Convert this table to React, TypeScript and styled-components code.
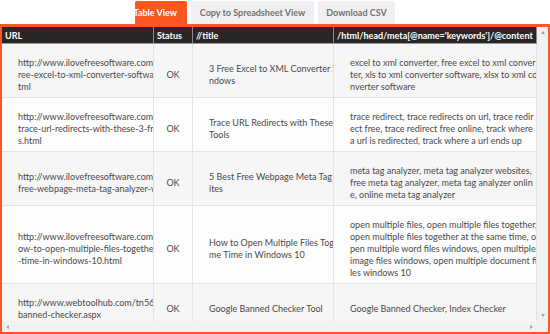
import React from 'react';
import { styled, createGlobalStyle } from 'styled-components';

const GlobalStyles = createGlobalStyle`
html, body {
  margin: 0;
  padding: 0;
  background: #ffffff;
}

body {
  font-family: Lato, 'Open Sans', sans-serif;
  width: 550px;
  height: 334px;
  overflow: hidden;
}
`;

const Page = styled.div`
  display: flex;
  flex-direction: column;
  width: 550px;
  height: 334px;
`;

const TabBar = styled.div`
  display: flex;
  gap: 4px;
  height: 23px;
  margin-top: 1px;
  padding-left: 135px;
`;

const Tab = styled.div<{ $active?: boolean; $width: number }>`
  display: flex;
  align-items: center;
  justify-content: ${(p) => (p.$active ? 'flex-end' : 'center')};
  width: ${(p) => p.$width}px;
  padding-right: ${(p) => (p.$active ? 10 : 0)}px;
  box-sizing: border-box;
  overflow: hidden;
  white-space: nowrap;
  border-radius: 2px 2px 0 0;
  background: ${(p) => (p.$active ? '#fd5621' : '#f0f0f0')};
  color: ${(p) => (p.$active ? '#ffffff' : '#737373')};
  font-size: 9px;
  font-weight: 700;
`;

const Frame = styled.div`
  display: flex;
  flex-direction: column;
  flex: 1;
  border: 2px solid #fd5621;
  border-top-width: 3px;
  min-height: 0;
`;

const Body = styled.div`
  display: flex;
  flex: 1;
  min-height: 0;
`;

const TableClip = styled.div`
  width: 535px;
  overflow: hidden;
`;

const Row = styled.div<{ $shade?: boolean }>`
  display: grid;
  grid-template-columns: 152px 39px 141px 203px;
  background: ${(p) => (p.$shade ? '#f6f6f6' : '#fdfdfd')};
  border-bottom: 1px solid #e3e3e3;
`;

const HeadRow = styled.div`
  display: grid;
  grid-template-columns: 152px 39px 141px 203px;
  height: 16px;
  background: #2a2626;
  border-bottom: 1px solid #9a9a9a;
`;

const HeadCell = styled.div`
  display: flex;
  align-items: center;
  padding-left: 3px;
  border-right: 1px solid #8a8a8a;
  color: #ffffff;
  font-size: 9px;
  font-weight: 700;
  white-space: nowrap;
  overflow: hidden;
`;

const Cell = styled.div<{ $center?: boolean }>`
  display: flex;
  flex-direction: column;
  justify-content: center;
  align-items: ${(p) => (p.$center ? 'center' : 'flex-start')};
  padding: 13px ${(p) => (p.$center ? 0 : 16)}px 4px;
  border-right: 1px solid #e3e3e3;
  overflow: hidden;
  color: #4a4a4a;
  font-size: 9px;
  line-height: 12px;
`;

const Line = styled.span`
  display: block;
  white-space: nowrap;
`;

const VScroll = styled.div`
  display: flex;
  flex-direction: column;
  justify-content: space-between;
  align-items: center;
  width: 11px;
  padding: 4px 0;
  box-sizing: border-box;
  background: #f1f1f1;
`;

const HScroll = styled.div`
  display: flex;
  justify-content: space-between;
  align-items: center;
  height: 11px;
  padding: 0 15px 0 4px;
  background: #f1f1f1;
`;

const Arrow = styled.span<{ $dir: 'up' | 'down' | 'left' | 'right' }>`
  width: 0;
  height: 0;
  border-style: solid;
  border-color: transparent;
  ${(p) =>
    p.$dir === 'up'
      ? 'border-width: 0 2.5px 3px 2.5px; border-bottom-color: #a3a3a3;'
      : p.$dir === 'down'
      ? 'border-width: 3px 2.5px 0 2.5px; border-top-color: #a3a3a3;'
      : p.$dir === 'left'
      ? 'border-width: 2.5px 3px 2.5px 0; border-right-color: #a3a3a3;'
      : 'border-width: 2.5px 0 2.5px 3px; border-left-color: #a3a3a3;'}
`;

type Entry = { url: string[]; status: string; title: string[]; keywords: string[] };

const rows: Entry[] = [
  {
    url: ['http://www.ilovefreesoftware.com/f', 'ree-excel-to-xml-converter-software-windows.h', 'tml'],
    status: 'OK',
    title: ['3 Free Excel to XML Converter Software For Wi', 'ndows'],
    keywords: [
      'excel to xml converter, free excel to xml conver',
      'ter, xls to xml converter software, xlsx to xml co',
      'nverter software',
    ],
  },
  {
    url: ['http://www.ilovefreesoftware.com/', 'trace-url-redirects-with-these-3-free-tool', 's.html'],
    status: 'OK',
    title: ['Trace URL Redirects with These 3 Free', 'Tools'],
    keywords: [
      'trace redirect, trace redirects on url, trace redir',
      'ect free, trace redirect free online, track where',
      'a url is redirected, track where a url ends up',
    ],
  },
  {
    url: ['http://www.ilovefreesoftware.com/', 'free-webpage-meta-tag-analyzer-websites.html'],
    status: 'OK',
    title: ['5 Best Free Webpage Meta Tag Analyzer Webs', 'ites'],
    keywords: [
      'meta tag analyzer, meta tag analyzer websites,',
      'free meta tag analyzer, meta tag analyzer onlin',
      'e, online meta tag analyzer',
    ],
  },
  {
    url: [
      'http://www.ilovefreesoftware.com/h',
      'ow-to-open-multiple-files-together-at-the-same',
      '-time-in-windows-10.html',
    ],
    status: 'OK',
    title: ['How to Open Multiple Files Together at the Sa', 'me Time in Windows 10'],
    keywords: [
      'open multiple files, open multiple files together,',
      'open multiple files together at the same time, o',
      'pen multiple word files windows, open multiple',
      'image files windows, open multiple document fi',
      'les windows 10',
    ],
  },
  {
    url: ['http://www.webtoolhub.com/tn561380-google-', 'banned-checker.aspx'],
    status: 'OK',
    title: ['Google Banned Checker Tool'],
    keywords: ['Google Banned Checker, Index Checker'],
  },
];

const Lines = ({ items }: { items: string[] }) => (
  <>
    {items.map((t, i) => (
      <Line key={i}>{t}</Line>
    ))}
  </>
);

export default function App() {
  return (
    <Page>
      <GlobalStyles />
      <TabBar>
        <Tab $active $width={52}>Table View</Tab>
        <Tab $width={123}>Copy to Spreadsheet View</Tab>
        <Tab $width={77}>Download CSV</Tab>
      </TabBar>
      <Frame>
        <Body>
          <TableClip>
            <HeadRow>
              <HeadCell>URL</HeadCell>
              <HeadCell>Status</HeadCell>
              <HeadCell>//title</HeadCell>
              <HeadCell>/html/head/meta[@name='keywords']/@content</HeadCell>
            </HeadRow>
            {rows.map((r, i) => (
              <Row key={i} $shade={i % 2 === 0}>
                <Cell>
                  <Lines items={r.url} />
                </Cell>
                <Cell $center>{r.status}</Cell>
                <Cell>
                  <Lines items={r.title} />
                </Cell>
                <Cell>
                  <Lines items={r.keywords} />
                </Cell>
              </Row>
            ))}
          </TableClip>
          <VScroll>
            <Arrow $dir="up" />
            <Arrow $dir="down" />
          </VScroll>
        </Body>
        <HScroll>
          <Arrow $dir="left" />
          <Arrow $dir="right" />
        </HScroll>
      </Frame>
    </Page>
  );
}
